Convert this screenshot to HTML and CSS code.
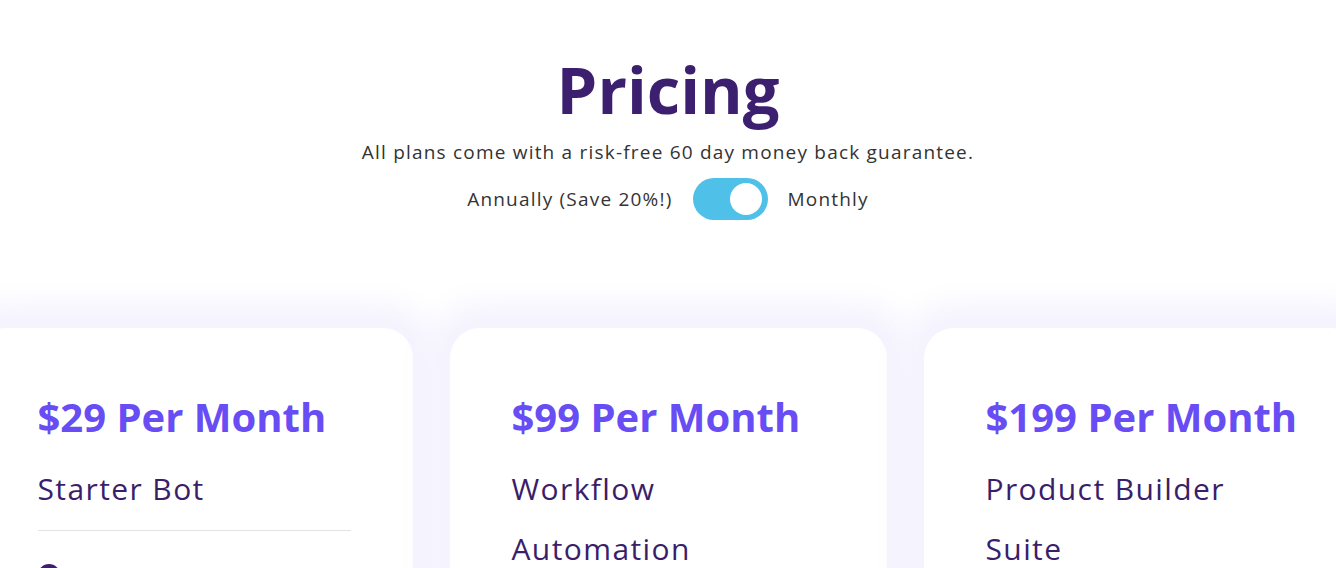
FILE: index.html
```html
<!DOCTYPE html>
<html lang="en">
<head>
  <meta charset="UTF-8">
  <title>Pricing</title>
  <meta name="viewport" content="width=device-width, initial-scale=1.0" />
  <link rel="stylesheet" href="styles.css">
</head>
<body>

<section class="pricing-head">
  <h1>Pricing</h1>
  <p class="lead">All plans come with a risk-free 60 day money back guarantee.</p>
  <div class="billing">
    <span>Annually (Save 20%!)</span>
    <label class="switch">
      <input type="checkbox" checked>
      <span class="knob"></span>
    </label>
    <span>Monthly</span>
  </div>
</section>

<section class="plans">
  <div class="plan-row">
    <div class="plan-card">
      <h2 class="price">$29 Per Month</h2>
      <h3 class="plan-name">Starter Bot</h3>
      <ul class="features">
        <li><span class="check"></span>1 chatbot with all templates</li>
        <li><span class="check"></span>Unlimited conversations</li>
        <li><span class="check"></span>Email support</li>
      </ul>
    </div>
    <div class="plan-card">
      <h2 class="price">$99 Per Month</h2>
      <h3 class="plan-name">Workflow Automation</h3>
      <ul class="features">
        <li><span class="check"></span>5 chatbots with all templates</li>
        <li><span class="check"></span>Workflow integrations</li>
        <li><span class="check"></span>Priority support</li>
      </ul>
    </div>
    <div class="plan-card">
      <h2 class="price">$199 Per Month</h2>
      <h3 class="plan-name">Product Builder Suite</h3>
      <ul class="features">
        <li><span class="check"></span>Unlimited chatbots</li>
        <li><span class="check"></span>Custom product builder</li>
        <li><span class="check"></span>Dedicated account manager</li>
      </ul>
    </div>
  </div>
</section>

</body>
</html>
```

FILE: styles.css
```css
* {
  box-sizing: border-box;
}

body {
  font-family: "Open Sans", Arial, sans-serif;
  margin: 0;
  background: #fff;
  overflow-x: hidden;
}

.pricing-head {
  padding-top: 50px;
  text-align: center;
}

h1 {
  font-size: 65px;
  line-height: 78px;
  font-weight: 700;
  color: #3c1f6e;
  margin: 0;
}

.lead {
  font-size: 19px;
  line-height: 28px;
  letter-spacing: 1.2px;
  color: #333;
  margin: 10px 0 0;
}

.billing {
  display: flex;
  justify-content: center;
  align-items: center;
  gap: 20px;
  margin-top: 12px;
  font-size: 19px;
  letter-spacing: 1.2px;
  color: #333;
}

.switch {
  position: relative;
  display: block;
  width: 75px;
  height: 42px;
}

.switch input {
  display: none;
}

.knob {
  display: block;
  width: 100%;
  height: 100%;
  border-radius: 21px;
  background: #4fc0e8;
}

.knob::after {
  content: "";
  position: absolute;
  top: 5px;
  right: 6px;
  width: 32px;
  height: 32px;
  border-radius: 50%;
  background: #fff;
}

.plans {
  margin-top: 108px;
  padding-bottom: 60px;
}

.plan-row {
  display: flex;
  justify-content: center;
  gap: 37px;
}

.plan-card {
  flex: 0 0 437px;
  background: #fff;
  border-radius: 30px;
  padding: 65px 62px 50px;
  box-shadow: 0 0 30px 25px #f4f3fe;
}

.price {
  font-size: 40px;
  line-height: 48px;
  font-weight: 700;
  color: #684df4;
  margin: 0;
}

.plan-name {
  font-size: 30px;
  line-height: 60px;
  font-weight: 400;
  letter-spacing: 1.4px;
  color: #3a1e6a;
  margin: 18px 0 0;
  padding-bottom: 11px;
  border-bottom: 1px solid #e3e3e3;
}

.features {
  list-style: none;
  margin: 31px 0 0;
  padding: 0;
}

.features li {
  display: flex;
  align-items: flex-start;
  gap: 34px;
  font-size: 19px;
  line-height: 30px;
  letter-spacing: 1.2px;
  color: #333;
  margin-bottom: 18px;
}

.check {
  flex: 0 0 22px;
  height: 22px;
  margin-top: 2px;
  border-radius: 50%;
  background: #3c1f6e;
}
```
